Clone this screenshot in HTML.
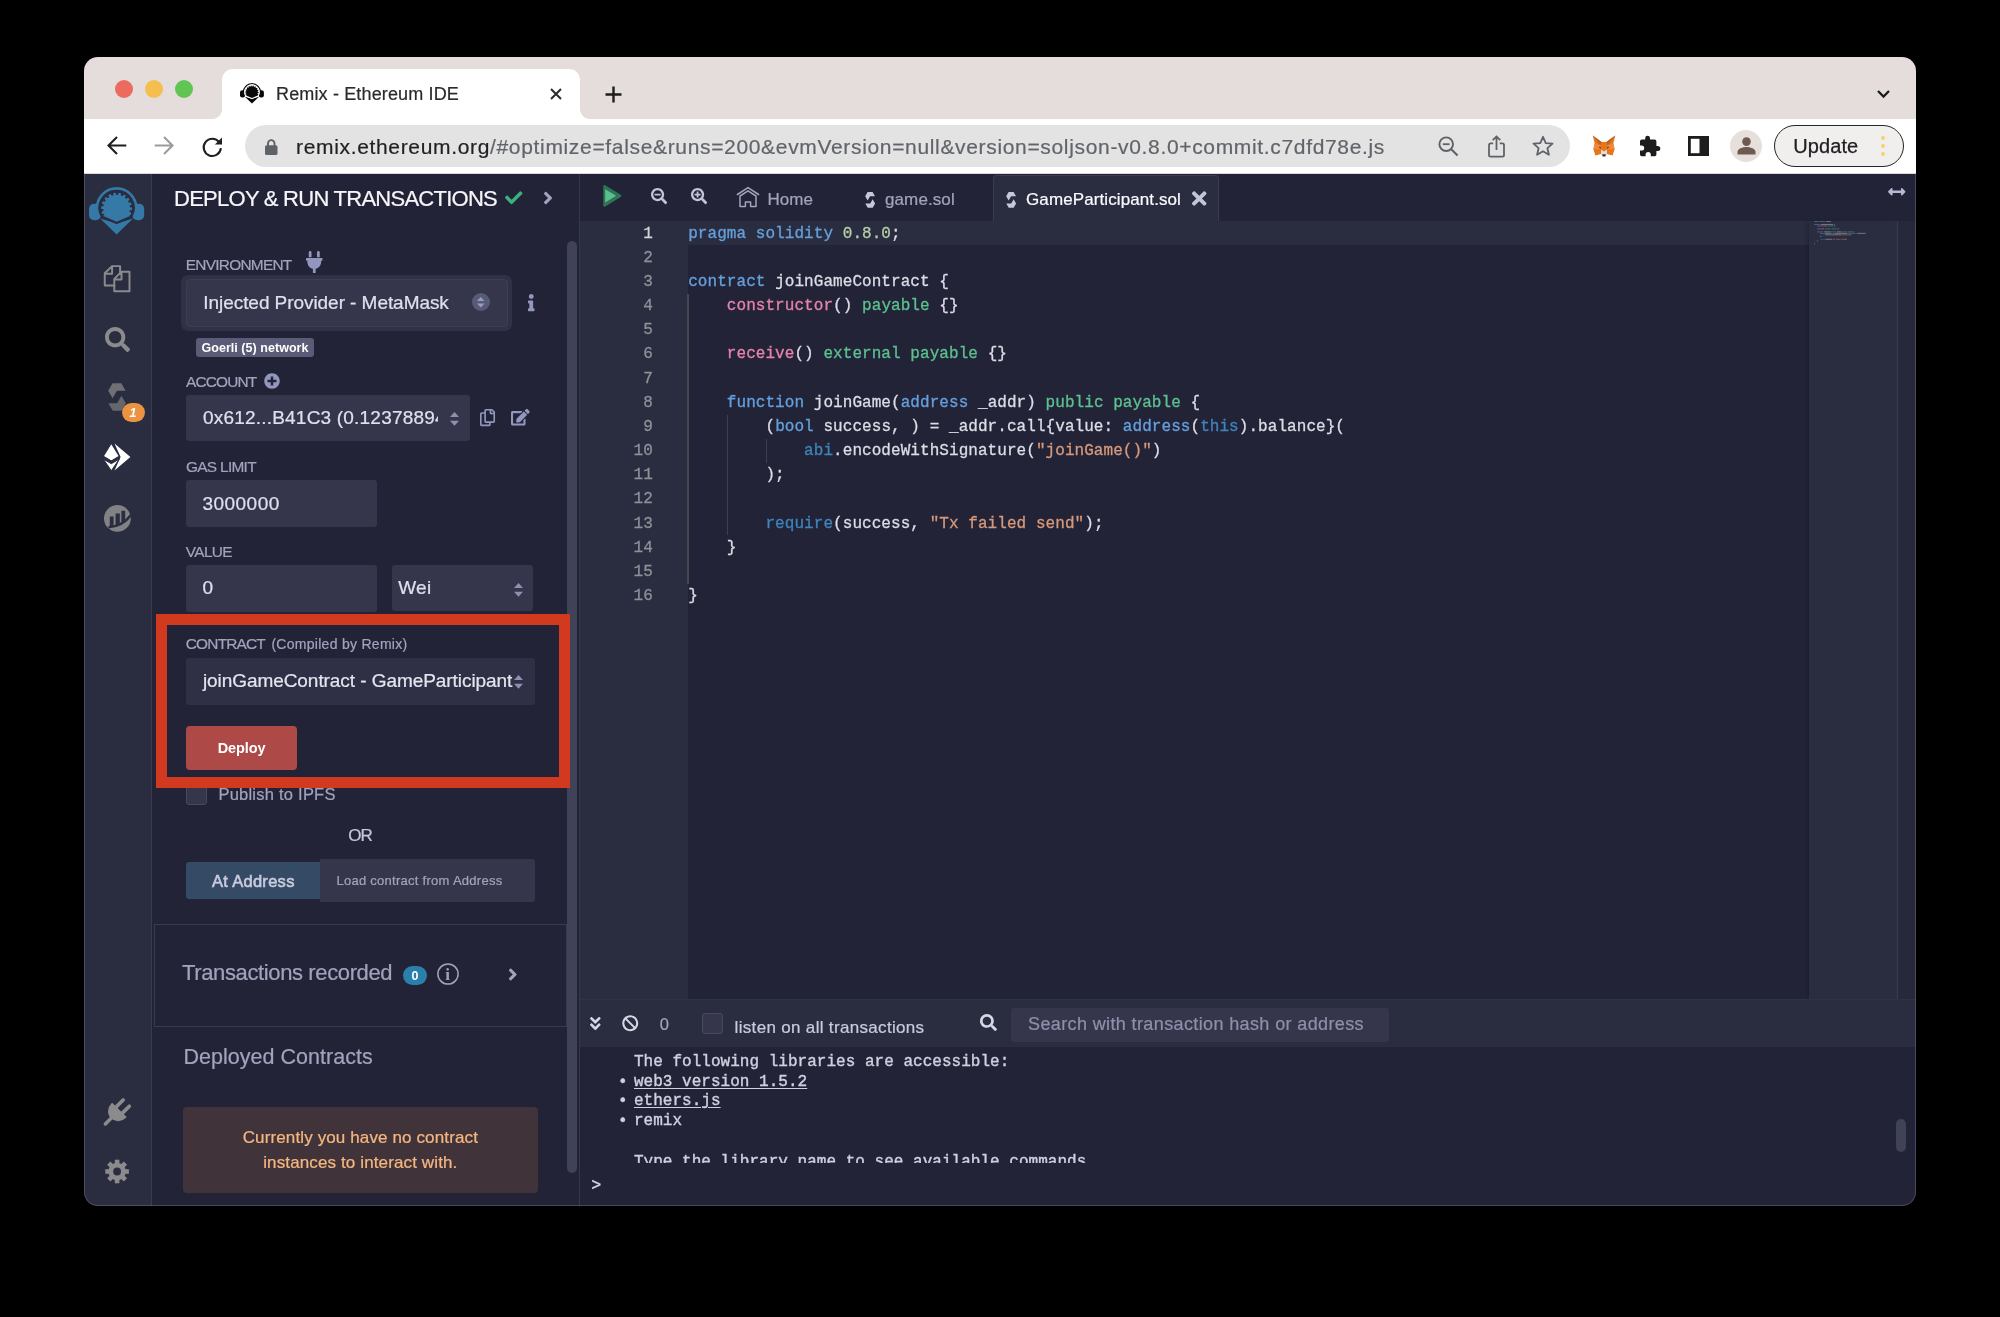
<!DOCTYPE html>
<html>
<head>
<meta charset="utf-8">
<title>Remix - Ethereum IDE</title>
<style>
*{box-sizing:border-box;margin:0;padding:0}
html,body{width:2000px;height:1317px;background:#000;overflow:hidden}
body{font-family:"Liberation Sans",sans-serif;position:relative}
#win{position:absolute;left:0;top:0;width:2000px;height:1317px;clip-path:inset(57px 84px 111px 84px round 14px);will-change:transform}
.a{position:absolute}
.t{position:absolute;white-space:pre;line-height:1}
svg{position:absolute;overflow:visible}
</style>
</head>
<body>
<div id="win">
<div class="a" style="left:84px;top:57px;width:1832px;height:1149px;background:#222336;"></div>
<div class="a" style="left:84px;top:57px;width:1832px;height:62px;background:#e4dddb;"></div>
<div class="a" style="left:222px;top:69px;width:358px;height:50px;background:#fff;border-radius:11px 11px 0 0;"></div>
<div class="a" style="left:212px;top:109px;width:10px;height:10px;background:radial-gradient(circle at 0 0,rgba(255,255,255,0) 9.5px,#fff 10.5px);"></div>
<div class="a" style="left:580px;top:109px;width:10px;height:10px;background:radial-gradient(circle at 100% 0,rgba(255,255,255,0) 9.5px,#fff 10.5px);"></div>
<div class="a" style="left:84px;top:119px;width:1832px;height:55px;background:#fff;"></div>
<div class="a" style="left:245px;top:125px;width:1325px;height:42px;background:#e3e3e3;border-radius:21px;"></div>
<div class="a" style="left:114.7px;top:79.6px;width:18px;height:18px;background:#ec6a5e;border-radius:50%;"></div>
<div class="a" style="left:144.6px;top:79.6px;width:18px;height:18px;background:#f4bf4f;border-radius:50%;"></div>
<div class="a" style="left:174.5px;top:79.6px;width:18px;height:18px;background:#61c554;border-radius:50%;"></div>
<svg style="left:240.1px;top:82.7px;" width="23.9" height="20.6" viewBox="11.5 15 121 104"><path d="M29.500,61 A42.500,42.500 0 0 1 114.500,61" stroke="#0a0a0a" stroke-width="7" fill="none"/><rect x="11.5" y="52" width="26" height="36" rx="11" fill="#0a0a0a"/><rect x="106.5" y="52" width="26" height="36" rx="11" fill="#0a0a0a"/><path d="M36,84 L72,95 L108,84 L72,119 Z" fill="#0a0a0a"/><path d="M39.350,79.850 A37.700,37.700 0 1 1 104.650,79.850 L72,94 Z" stroke="#fff" stroke-width="4.700" fill="#fff" stroke-linejoin="round"/><path d="M45.7,73.8 L40.4,74.1 L39.0,69.6 L43.5,66.8 L43.1,64.0 L38.0,62.6 L38.2,57.8 L43.4,56.8 L44.0,54.0 L39.7,50.9 L41.5,46.5 L46.7,47.3 L48.2,44.9 L45.3,40.5 L48.5,37.0 L53.1,39.5 L55.4,37.7 L54.1,32.6 L58.3,30.4 L61.8,34.4 L64.5,33.5 L65.0,28.2 L69.7,27.6 L71.7,32.5 L74.5,32.6 L76.8,27.8 L81.5,28.9 L81.6,34.1 L84.3,35.2 L88.1,31.5 L92.1,34.1 L90.4,39.1 L92.5,41.0 L97.3,38.8 L100.3,42.6 L97.0,46.7 L98.3,49.2 L103.6,48.9 L105.0,53.4 L100.5,56.2 L100.9,59.0 L106.0,60.4 L105.8,65.2 L100.6,66.2 L100.0,69.0 L104.3,72.1 L102.5,76.5 L97.3,75.7 L98.3,73.8 L101.3,78.6 L72,91.3 L42.7,78.6 Z" fill="#0a0a0a"/></svg>
<div class="t" style="left:276.00px;top:85.00px;font-size:18px;color:#2a2a2a;letter-spacing:0.148px;-webkit-text-stroke:0.2px;">Remix - Ethereum IDE</div>
<svg style="left:550px;top:88px;" width="12" height="12" viewBox="0 0 12 12"><path d="M1,1 L11,11 M11,1 L1,11" stroke="#2a2a2a" stroke-width="2" fill="none"/></svg>
<svg style="left:604.5px;top:85.5px;" width="17" height="17" viewBox="0 0 17 17"><path d="M8.5,0.5 V16.5 M0.5,8.5 H16.5" stroke="#1c1c1c" stroke-width="2.4" fill="none"/></svg>
<svg style="left:1877px;top:90px;" width="13" height="8" viewBox="0 0 13 8"><path d="M1,1 L6.5,6.5 L12,1" stroke="#1c1c1c" stroke-width="2.3" fill="none"/></svg>
<svg style="left:106.5px;top:136px;" width="20" height="19" viewBox="0 0 20 19"><path d="M19.3,9.5 H2 M10,1 L1.5,9.5 L10,18" stroke="#1f1f1f" stroke-width="2.1" fill="none" stroke-linejoin="miter"/></svg>
<svg style="left:154px;top:136px;" width="20" height="19" viewBox="0 0 20 19"><path d="M0.7,9.5 H18 M10,1 L18.5,9.5 L10,18" stroke="#9b9b9b" stroke-width="2.1" fill="none"/></svg>
<svg style="left:201.5px;top:135.5px;" width="21" height="21" viewBox="0 0 21 21"><path d="M17.2,6.2 A8.6,8.6 0 1 0 18.9,12.2" stroke="#1f1f1f" stroke-width="2.1" fill="none"/><path d="M20,1.5 V8.6 H12.9 Z" fill="#1f1f1f"/></svg>
<svg style="left:264.8px;top:138.5px;" width="12.5" height="16" viewBox="0 0 12.5 16"><rect x="0" y="6.2" width="12.5" height="9.8" rx="1.6" fill="#5f6368"/><path d="M3,7 V4.4 A3.25,3.25 0 0 1 9.5,4.4 V7" stroke="#5f6368" stroke-width="1.9" fill="none"/></svg>
<div class="t" style="left:296.00px;top:136.00px;font-size:21px;color:#61656a;letter-spacing:0.664px;-webkit-text-stroke:0.2px;"><span style="color:#1f2023">remix.ethereum.org</span>/#optimize=false&amp;runs=200&amp;evmVersion=null&amp;version=soljson-v0.8.0+commit.c7dfd78e.js</div>
<svg style="left:1437.5px;top:136px;" width="21" height="21" viewBox="0 0 21 21"><circle cx="8.2" cy="8.2" r="6.8" stroke="#5f6368" stroke-width="1.9" fill="none"/><path d="M13.2,13.2 L19.6,19.6" stroke="#5f6368" stroke-width="2.1"/><path d="M4.8,8.2 H11.6" stroke="#5f6368" stroke-width="1.8"/></svg>
<svg style="left:1487.5px;top:135px;" width="17" height="23" viewBox="0 0 17 23"><path d="M5.2,8.3 H2.6 A1.6,1.6 0 0 0 1,9.9 V20.1 A1.6,1.6 0 0 0 2.6,21.7 H14.4 A1.6,1.6 0 0 0 16,20.1 V9.9 A1.6,1.6 0 0 0 14.400,8.300 H11.800" stroke="#5f6368" stroke-width="1.8" fill="none"/><path d="M8.5,15 V1.800 M4.700,5.200 L8.500,1.500 L12.300,5.200" stroke="#5f6368" stroke-width="1.8" fill="none"/></svg>
<svg style="left:1532px;top:135px;" width="22" height="21" viewBox="0 0 22 21"><path d="M11,1.8 L13.75,8.05 L20.5,8.7 L15.4,13.2 L16.9,19.8 L11,16.3 L5.1,19.8 L6.6,13.2 L1.5,8.7 L8.25,8.05 Z" stroke="#5f6368" stroke-width="1.8" fill="none" stroke-linejoin="round"/></svg>
<svg style="left:1591.5px;top:135px;" width="24" height="23" viewBox="0 0 24 23"><path d="M0.7,0.6 L9.6,6.9 L14.4,6.9 L23.3,0.6 L21.3,8.600 L22.600,14.2 L20.6,20.6 L15,19.1 L13.6,20.9 L10.4,20.9 L9,19.1 L3.4,20.6 L1.4,14.2 L2.7,8.6 Z" fill="#e4761b"/><path d="M0.7,0.6 L9.6,6.9 L8.4,10.2 Z M23.3,0.6 L14.4,6.9 L15.6,10.2 Z" fill="#c0601a"/><path d="M2.7,8.6 L8.4,10.2 L9.2,14.4 L1.4,14.2 Z M21.3,8.6 L15.6,10.2 L14.8,14.4 L22.6,14.2 Z" fill="#f0883a"/><path d="M9.2,14.4 L9,19.1 L10.4,20.9 L13.6,20.9 L15,19.1 L14.8,14.4 L12,16.4 Z" fill="#e8ddd2"/><path d="M10.3,19.3 L13.7,19.3 L13.4,21.6 L10.6,21.6 Z" fill="#3a3028"/><path d="M6.6,11.6 L9,12.6 L8.4,13.700 Z M17.4,11.6 L15,12.6 L15.6,13.7 Z" fill="#2b2420"/></svg>
<svg style="left:1639px;top:135px;" width="22" height="22" viewBox="0 0 22 22"><path d="M8.6,0.8 A2.4,2.4 0 0 1 11,3.2 V4.6 H15.600 A1.800,1.800 0 0 1 17.400,6.400 V10.900 H18.800 A2.500,2.500 0 0 1 18.800,15.900 H17.400 V19.400 A1.800,1.800 0 0 1 15.600,21.200 H11.800 V19.600 A2.600,2.600 0 0 0 6.600,19.600 V21.200 H2.800 A1.800,1.800 0 0 1 1,19.400 V15.600 H2.600 A2.600,2.600 0 0 0 2.600,10.400 H1 V6.400 A1.800,1.800 0 0 1 2.800,4.600 H6.200 V3.200 A2.400,2.400 0 0 1 8.600,0.800 Z" fill="#1d1d1f"/></svg>
<svg style="left:1688px;top:136px;" width="21" height="20" viewBox="0 0 21 20"><rect x="1.400" y="1.400" width="18.200" height="17.200" stroke="#1d1d1f" stroke-width="2.8" fill="none"/><rect x="11.5" y="1" width="9" height="18" fill="#1d1d1f"/></svg>
<div class="a" style="left:1729.7px;top:129.7px;width:32.6px;height:32.6px;background:#e6dfdc;border-radius:50%;"></div>
<svg style="left:1736.5px;top:137px;" width="19" height="18" viewBox="0 0 19 18"><circle cx="9.5" cy="4.600" r="4.300" fill="#6e5a50"/><path d="M0.500,17.500 V14.800 C0.500,11.300 6,9.900 9.500,9.900 C13,9.900 18.500,11.300 18.500,14.800 V17.500 Z" fill="#6e5a50"/></svg>
<div class="a" style="left:1774px;top:125px;width:130px;height:41.5px;background:#f1efee;border-radius:21px;border:1.6px solid #26262a;"></div>
<div class="t" style="left:1793.30px;top:136.00px;font-size:20px;color:#1f1f22;letter-spacing:0.083px;-webkit-text-stroke:0.25px;">Update</div>
<div class="a" style="left:1881.2px;top:135.70000000000002px;width:4.2px;height:4.2px;background:#f3d56a;border-radius:50%;"></div>
<div class="a" style="left:1881.2px;top:143.9px;width:4.2px;height:4.2px;background:#f3d56a;border-radius:50%;"></div>
<div class="a" style="left:1881.2px;top:152.1px;width:4.2px;height:4.2px;background:#f3d56a;border-radius:50%;"></div>
<div class="a" style="left:84px;top:173px;width:1832px;height:1px;background:#d9d9dc;"></div>
<div class="a" style="left:84px;top:174px;width:67px;height:1032px;background:#2a2c3f;"></div>
<div class="a" style="left:151px;top:174px;width:1px;height:1032px;background:#393b50;"></div>
<svg style="left:89.2px;top:186.8px;" width="55.2" height="47.4" viewBox="11.5 15 121 104"><path d="M29.500,61 A42.500,42.500 0 0 1 114.500,61" stroke="#3579a6" stroke-width="7" fill="none"/><rect x="11.5" y="52" width="26" height="36" rx="11" fill="#3579a6"/><rect x="106.5" y="52" width="26" height="36" rx="11" fill="#3579a6"/><path d="M36,84 L72,95 L108,84 L72,119 Z" fill="#3579a6"/><path d="M39.350,79.850 A37.700,37.700 0 1 1 104.650,79.850 L72,94 Z" stroke="#2a2c3f" stroke-width="4.700" fill="#2a2c3f" stroke-linejoin="round"/><path d="M45.7,73.8 L40.4,74.1 L39.0,69.6 L43.5,66.8 L43.1,64.0 L38.0,62.6 L38.2,57.8 L43.4,56.8 L44.0,54.0 L39.7,50.9 L41.5,46.5 L46.7,47.3 L48.2,44.9 L45.3,40.5 L48.5,37.0 L53.1,39.5 L55.4,37.7 L54.1,32.6 L58.3,30.4 L61.8,34.4 L64.5,33.5 L65.0,28.2 L69.7,27.6 L71.7,32.5 L74.5,32.6 L76.8,27.8 L81.5,28.9 L81.6,34.1 L84.3,35.2 L88.1,31.5 L92.1,34.1 L90.4,39.1 L92.5,41.0 L97.3,38.8 L100.3,42.6 L97.0,46.7 L98.3,49.2 L103.6,48.9 L105.0,53.4 L100.5,56.2 L100.9,59.0 L106.0,60.4 L105.8,65.2 L100.6,66.2 L100.0,69.0 L104.3,72.1 L102.5,76.5 L97.3,75.7 L98.3,73.8 L101.3,78.6 L72,91.3 L42.7,78.6 Z" fill="#3579a6"/></svg>
<svg style="left:100px;top:262px;" width="34" height="34" viewBox="0 0 34 34"><path d="M12.1,4.1 H20.1 V10.300 M12.1,4.1 L4.74,11.3 V23.4 H14.3 M12.1,4.1 V11.8 H4.74" stroke="#8b8b8d" stroke-width="1.950" fill="none" stroke-linejoin="round" stroke-linecap="round"/><path d="M21.5,9.74 H29.5 V29.2 H14.3 V16.9 L21.5,9.74 V17.4 H14.3" stroke="#8b8b8d" stroke-width="1.950" fill="none" stroke-linejoin="round" stroke-linecap="round"/></svg>
<svg style="left:104.7px;top:326.9px;" width="25.0" height="25" viewBox="0 0 512 512"><path d="M505 442.7L405.3 343c-4.5-4.5-10.6-7-17-7H372c27.6-35.3 44-79.7 44-128C416 93.1 322.9 0 208 0S0 93.1 0 208s93.1 208 208 208c48.3 0 92.7-16.4 128-44v16.3c0 6.4 2.5 12.5 7 17l99.7 99.7c9.4 9.4 24.6 9.4 33.9 0l28.3-28.3c9.4-9.4 9.4-24.6.1-34zM208 336c-70.7 0-128-57.2-128-128 0-70.7 57.2-128 128-128 70.7 0 128 57.2 128 128 0 70.7-57.2 128-128 128z" fill="#8b8b8d" /></svg>
<svg style="left:108.1px;top:383.3px;" width="18" height="28" viewBox="0 0 18 28"><path d="M0.2,7.7 L4.5,0.2 L13.3,0.2 L17.6,7.7 L8.9,7.7 L4.6,15.2 Z" fill="#6f6f74"/><path d="M17.8,20.3 L13.5,27.8 L4.7,27.8 L0.4,20.3 L9.1,20.3 L13.4,12.8 Z" fill="#66666b"/></svg>
<div class="a" style="left:121.7px;top:403px;width:23.2px;height:19px;background:#ea9340;border-radius:9.5px;"></div>
<div class="t" style="left:129.60px;top:407.00px;font-size:12.5px;color:#fff;font-weight:700;font-style:italic;">1</div>
<svg style="left:103px;top:442.5px;" width="28" height="28" viewBox="0 0 28 28"><path d="M11.500,0.500 L27.400,14 L11.500,27.500 L17.600,14 Z" fill="#fff"/><path d="M8.300,0.300 L0.300,13.300 L8.300,17.900 L16.300,13.300 Z" fill="#fff" stroke="#2a2c3f" stroke-width="1.100" stroke-linejoin="round"/><path d="M0.300,16.100 L8.300,20.700 L16.300,16.100 L8.300,27.700 Z" fill="#fff" stroke="#2a2c3f" stroke-width="1" stroke-linejoin="round"/></svg>
<svg style="left:103.6px;top:505px;" width="26.8" height="26.8" viewBox="0 0 26.800 26.800"><circle cx="13.400" cy="13.400" r="13.400" fill="#828286"/><path d="M5.800,11.600 H9.600 V21 H5.800 Z M11.600,8.600 H15.800 V20 H11.600 Z M17.400,5.700 H21.200 V18 H17.400 Z" fill="#2a2c3f"/><path d="M4.500,22.300 C12,21.800 21,18 27.500,9.500" stroke="#2a2c3f" stroke-width="2.600" fill="none"/></svg>
<svg style="left:0px;top:0px;" width="10" height="10" viewBox="0 0 10 10"><g transform="translate(119,1110.300) rotate(45)"><path d="M-10.200,-0.600 H10.200 V0.600 A10.200,10.800 0 0 1 -10.200,0.600 Z" fill="#8b8b8d"/><path d="M-4.400,0 V-10.200 M4.400,0 V-10.200" stroke="#8b8b8d" stroke-width="3.700" stroke-linecap="round"/><path d="M0,9 V19.300" stroke="#8b8b8d" stroke-width="3.500" stroke-linecap="round"/></g></svg>
<svg style="left:0px;top:0px;" width="10" height="10" viewBox="0 0 10 10"><g transform="translate(117.100,1171.500)"><circle r="8.700" fill="#8b8b8d"/><rect x="-2.300" y="-11.800" width="4.600" height="6" transform="rotate(0)" fill="#8b8b8d"/><rect x="-2.300" y="-11.800" width="4.600" height="6" transform="rotate(45)" fill="#8b8b8d"/><rect x="-2.300" y="-11.800" width="4.600" height="6" transform="rotate(90)" fill="#8b8b8d"/><rect x="-2.300" y="-11.800" width="4.600" height="6" transform="rotate(135)" fill="#8b8b8d"/><rect x="-2.300" y="-11.800" width="4.600" height="6" transform="rotate(180)" fill="#8b8b8d"/><rect x="-2.300" y="-11.800" width="4.600" height="6" transform="rotate(225)" fill="#8b8b8d"/><rect x="-2.300" y="-11.800" width="4.600" height="6" transform="rotate(270)" fill="#8b8b8d"/><rect x="-2.300" y="-11.800" width="4.600" height="6" transform="rotate(315)" fill="#8b8b8d"/><circle r="3.900" fill="#2a2c3f"/></g></svg>
<div class="a" style="left:579px;top:174px;width:1px;height:1032px;background:#34364a;"></div>
<div class="t" style="left:174.00px;top:188.00px;font-size:22px;color:#f6f6fa;letter-spacing:-0.739px;-webkit-text-stroke:0.22px;">DEPLOY &amp; RUN TRANSACTIONS</div>
<svg style="left:504.85px;top:189.45px;" width="17.5" height="17.5" viewBox="0 0 512 512"><path d="M173.898 439.404l-166.4-166.4c-9.997-9.997-9.997-26.206 0-36.204l36.203-36.204c9.997-9.998 26.207-9.998 36.204 0L192 312.69 432.095 72.596c9.997-9.997 26.207-9.997 36.204 0l36.203 36.204c9.997 9.997 9.997 26.206 0 36.204l-294.4 294.401c-9.998 9.997-26.207 9.997-36.204-.001z" fill="#3bb27d" /></svg>
<svg style="left:542.5px;top:188.0px;" width="10.0" height="20" viewBox="0 0 256 512"><path d="M224.3 273l-136 136c-9.4 9.4-24.6 9.4-33.9 0l-22.6-22.6c-9.4-9.4-9.4-24.6 0-33.9l96.4-96.4-96.4-96.4c-9.4-9.4-9.4-24.6 0-33.9L54.3 103c9.4-9.4 24.6-9.4 33.9 0l136 136c9.5 9.4 9.5 24.6.1 34z" fill="#a2a3bd" /></svg>
<div class="t" style="left:185.80px;top:257.00px;font-size:15.4px;color:#a2a3bd;letter-spacing:-0.73px;-webkit-text-stroke:0.22px;">ENVIRONMENT</div>
<svg style="left:306.25px;top:251.0px;" width="16.5" height="22" viewBox="0 0 384 512"><path d="M256 144V32c0-17.673 14.327-32 32-32s32 14.327 32 32v112h-64zm112 16H16c-8.837 0-16 7.163-16 16v32c0 8.837 7.163 16 16 16h16v32c0 77.406 54.969 141.971 128 156.796V512h64v-99.204c73.031-14.825 128-79.39 128-156.796v-32h16c8.837 0 16-7.163 16-16v-32c0-8.837-7.163-16-16-16zm-240-16V32c0-17.673-14.327-32-32-32S64 14.327 64 32v112h64z" fill="#9397bd" /></svg>
<div class="a" style="left:181.4px;top:275px;width:330.6px;height:56.4px;background:#303146;border-radius:7px;"></div>
<div class="a" style="left:185.5px;top:279.3px;width:322.6px;height:47.8px;background:#35364b;border-radius:4px;border:1px solid #3d3e54;"></div>
<div class="t" style="left:203.30px;top:293.00px;font-size:19px;color:#dfe0ee;letter-spacing:-0.057px;-webkit-text-stroke:0.22px;">Injected Provider - MetaMask</div>
<div class="a" style="left:472px;top:292.8px;width:18px;height:18px;background:#585b76;border-radius:50%;"></div>
<svg style="left:477.25px;top:296.5px;" width="7.5" height="10.6" viewBox="0 0 7.5 10.6"><path d="M0,4 L3.75,0 L7.5,4 Z M0,6.6 L3.75,10.6 L7.5,6.6 Z" fill="#9a9cbb"/></svg>
<svg style="left:528.26px;top:293.65px;" width="6.49" height="17.3" viewBox="0 0 192 512"><path d="M20 424.229h20V279.771H20c-11.046 0-20-8.954-20-20V212c0-11.046 8.954-20 20-20h112c11.046 0 20 8.954 20 20v212.229h20c11.046 0 20 8.954 20 20V492c0 11.046-8.954 20-20 20H20c-11.046 0-20-8.954-20-20v-47.771c0-11.046 8.954-20 20-20zM96 0C56.235 0 24 32.235 24 72s32.235 72 72 72 72-32.235 72-72S135.764 0 96 0z" fill="#9397bd" /></svg>
<div class="a" style="left:196px;top:337.7px;width:117.8px;height:19.3px;background:#5a5c77;border-radius:3px;"></div>
<div class="t" style="left:201.50px;top:342.00px;font-size:12.5px;color:#fff;font-weight:700;letter-spacing:0.04px;">Goerli (5) network</div>
<div class="t" style="left:186.00px;top:374.00px;font-size:15.4px;color:#a2a3bd;letter-spacing:-0.83px;-webkit-text-stroke:0.22px;">ACCOUNT</div>
<svg style="left:264.0px;top:372.5px;" width="16.0" height="16" viewBox="0 0 512 512"><path d="M256 8C119 8 8 119 8 256s111 248 248 248 248-111 248-248S393 8 256 8zm144 276c0 6.6-5.4 12-12 12h-92v92c0 6.6-5.4 12-12 12h-56c-6.6 0-12-5.4-12-12v-92h-92c-6.6 0-12-5.4-12-12v-56c0-6.6 5.4-12 12-12h92v-92c0-6.6 5.4-12 12-12h56c6.6 0 12 5.4 12 12v92h92c6.6 0 12 5.4 12 12v56z" fill="#9397bd" /></svg>
<div class="a" style="left:186.4px;top:395.2px;width:283.3px;height:46px;background:#35364b;border-radius:3px;"></div>
<div class="a" style="left:203px;top:400px;width:234.500px;height:36px;overflow:hidden"><div class="t" style="left:0.00px;top:8.00px;font-size:19px;color:#dfe0ee;letter-spacing:0.203px;-webkit-text-stroke:0.22px;">0x612...B41C3 (0.12378894</div>
</div>
<svg style="left:450.3px;top:411.5px;" width="9" height="13.8" viewBox="0 0 9 13.8"><path d="M0,5 L4.5,0 L9,5 Z M0,8.8 L4.5,13.8 L9,8.8 Z" fill="#8d90b0"/></svg>
<svg style="left:480.08px;top:408.5px;" width="15.05" height="17.2" viewBox="0 0 448 512"><path d="M433.941 65.941l-51.882-51.882A48 48 0 0 0 348.118 0H176c-26.51 0-48 21.49-48 48v48H48c-26.51 0-48 21.49-48 48v320c0 26.51 21.49 48 48 48h224c26.51 0 48-21.49 48-48v-48h80c26.51 0 48-21.49 48-48V99.882a48 48 0 0 0-14.059-33.941zM266 464H54a6 6 0 0 1-6-6V150a6 6 0 0 1 6-6h74v224c0 26.51 21.49 48 48 48h96v42a6 6 0 0 1-6 6zm128-96H182a6 6 0 0 1-6-6V54a6 6 0 0 1 6-6h106v88c0 13.255 10.745 24 24 24h88v202a6 6 0 0 1-6 6zm6-256h-64V48h9.632c1.591 0 3.117.632 4.243 1.757l48.368 48.368a6 6 0 0 1 1.757 4.243V112z" fill="#9397bd" /></svg>
<svg style="left:510.96px;top:408.5px;" width="18.68" height="16.6" viewBox="0 0 576 512"><path d="M402.6 83.2l90.2 90.2c3.8 3.8 3.8 10 0 13.8L274.4 405.6l-92.8 10.3c-12.4 1.4-22.9-9.1-21.5-21.5l10.3-92.8L388.8 83.2c3.8-3.800 10-3.800 13.800 0zm162-22.9l-48.8-48.8c-15.2-15.2-39.9-15.2-55.2 0l-35.400 35.400c-3.800 3.800-3.800 10 0 13.800l90.200 90.200c3.800 3.800 10 3.800 13.800 0l35.400-35.400c15.200-15.300 15.200-40 0-55.200zM384 346.200V448H64V128h229.800c3.200 0 6.200-1.300 8.500-3.500l40-40c7.600-7.600 2.200-20.500-8.500-20.500H48C21.500 64 0 85.500 0 112v352c0 26.500 21.500 48 48 48h352c26.500 0 48-21.500 48-48V306.200c0-10.700-12.900-16-20.500-8.500l-40 40c-2.200 2.300-3.500 5.300-3.500 8.500z" fill="#9397bd" /></svg>
<div class="t" style="left:186.00px;top:459.00px;font-size:15.4px;color:#a2a3bd;letter-spacing:-0.69px;-webkit-text-stroke:0.22px;">GAS LIMIT</div>
<div class="a" style="left:186px;top:480px;width:191.3px;height:46.7px;background:#35364b;border-radius:3px;"></div>
<div class="t" style="left:202.40px;top:494.00px;font-size:19px;color:#dfe0ee;letter-spacing:0.49px;-webkit-text-stroke:0.22px;">3000000</div>
<div class="t" style="left:185.80px;top:544.00px;font-size:15.4px;color:#a2a3bd;letter-spacing:-0.63px;-webkit-text-stroke:0.22px;">VALUE</div>
<div class="a" style="left:186px;top:564.6px;width:191.2px;height:47px;background:#35364b;border-radius:3px;"></div>
<div class="t" style="left:202.40px;top:578.00px;font-size:19px;color:#dfe0ee;-webkit-text-stroke:0.22px;">0</div>
<div class="a" style="left:391.5px;top:565.3px;width:141.7px;height:45.6px;background:#35364b;border-radius:3px;"></div>
<div class="t" style="left:398.30px;top:578.00px;font-size:19px;color:#dfe0ee;letter-spacing:0.236px;-webkit-text-stroke:0.22px;">Wei</div>
<svg style="left:513.9px;top:582.8000000000001px;" width="9" height="13.8" viewBox="0 0 9 13.8"><path d="M0,5 L4.5,0 L9,5 Z M0,8.8 L4.5,13.8 L9,8.8 Z" fill="#8d90b0"/></svg>
<div class="t" style="left:185.80px;top:636.00px;font-size:15.4px;color:#a2a3bd;letter-spacing:-0.79px;-webkit-text-stroke:0.22px;">CONTRACT</div>
<div class="t" style="left:271.40px;top:637.00px;font-size:14px;color:#a2a3bd;letter-spacing:0.284px;-webkit-text-stroke:0.22px;">(Compiled by Remix)</div>
<div class="a" style="left:185.8px;top:658px;width:349.2px;height:47.4px;background:#2f3045;border-radius:3px;"></div>
<div class="t" style="left:202.90px;top:671.00px;font-size:19px;color:#e4e5f0;letter-spacing:-0.062px;-webkit-text-stroke:0.22px;">joinGameContract - GameParticipant</div>
<svg style="left:513.9px;top:675.1px;" width="9" height="13.8" viewBox="0 0 9 13.8"><path d="M0,5 L4.5,0 L9,5 Z M0,8.8 L4.5,13.8 L9,8.8 Z" fill="#8d90b0"/></svg>
<div class="a" style="left:185.8px;top:726.4px;width:111.2px;height:43.3px;background:#ad4946;border-radius:4px;"></div>
<div class="t" style="left:217.70px;top:741.00px;font-size:14.5px;color:#fff;font-weight:700;letter-spacing:-0.091px;">Deploy</div>
<div class="a" style="left:185.8px;top:783.5px;width:21.2px;height:21px;background:#35364b;border-radius:3px;border:1px solid #474960;"></div>
<div class="t" style="left:218.40px;top:786.00px;font-size:16.5px;color:#a2a3bd;letter-spacing:0.238px;-webkit-text-stroke:0.22px;">Publish to IPFS</div>
<div class="a" style="left:567px;top:241px;width:10.4px;height:932px;background:#404258;border-radius:5.200px;"></div>
<div class="a" style="left:156px;top:614.3px;width:414.4px;height:173.7px;background:transparent;border:11px solid #d13a1f;"></div>
<div class="t" style="left:348.20px;top:827.00px;font-size:17px;color:#c6c7d9;letter-spacing:-0.85px;-webkit-text-stroke:0.22px;">OR</div>
<div class="a" style="left:185.8px;top:862px;width:133.9px;height:37px;background:#354a64;border-radius:3px 0 0 3px;"></div>
<div class="t" style="left:212.00px;top:873.00px;font-size:16.5px;color:#c9cbdf;letter-spacing:0.29px;-webkit-text-stroke:0.6px;">At Address</div>
<div class="a" style="left:319.7px;top:859.2px;width:215.3px;height:42.8px;background:#35364b;border-radius:0 3px 3px 0;"></div>
<div class="t" style="left:336.40px;top:874.00px;font-size:13px;color:#a2a3bd;letter-spacing:0.274px;-webkit-text-stroke:0.22px;">Load contract from Address</div>
<div class="a" style="left:154px;top:923.5px;width:412.5px;height:103.2px;background:transparent;border:1px solid #383a4f;"></div>
<div class="t" style="left:182.00px;top:962.00px;font-size:22px;color:#a2a3bd;letter-spacing:-0.375px;-webkit-text-stroke:0.22px;">Transactions recorded</div>
<div class="a" style="left:403.4px;top:965.9px;width:23.4px;height:19.1px;background:#2b7fab;border-radius:9.500px;"></div>
<div class="t" style="left:411.50px;top:970.00px;font-size:12.5px;color:#fff;font-weight:700;">0</div>
<svg style="left:437px;top:963.3px;" width="22" height="22" viewBox="0 0 22 22"><circle cx="11" cy="11" r="10.100" stroke="#a2a3bd" stroke-width="1.500" fill="none"/></svg>
<div class="t" style="left:445.30px;top:966.00px;font-size:17px;color:#a2a3bd;font-weight:700;font-family:'Liberation Serif',serif;">i</div>
<svg style="left:507.95px;top:964.5px;" width="9.5" height="19" viewBox="0 0 256 512"><path d="M224.3 273l-136 136c-9.4 9.4-24.6 9.4-33.9 0l-22.6-22.6c-9.4-9.4-9.4-24.6 0-33.9l96.4-96.4-96.4-96.4c-9.4-9.4-9.4-24.6 0-33.9L54.3 103c9.4-9.4 24.6-9.4 33.9 0l136 136c9.5 9.4 9.5 24.6.1 34z" fill="#a2a3bd" /></svg>
<div class="t" style="left:183.50px;top:1047.00px;font-size:21.5px;color:#a2a3bd;letter-spacing:0.026px;-webkit-text-stroke:0.22px;">Deployed Contracts</div>
<div class="a" style="left:182.7px;top:1107.4px;width:355.3px;height:86.1px;background:#40343a;border-radius:4px;"></div>
<div class="t" style="left:182.700px;top:1128.91px;width:355.300px;text-align:center;font-size:17px;line-height:25.500px;color:#f6b680;letter-spacing:0.126px;white-space:normal;-webkit-text-stroke:0.22px"><div style="margin-top:-4.250px">Currently you have no contract<br>instances to interact with.</div></div>
<div class="a" style="left:992.5px;top:174.5px;width:226.5px;height:47px;background:#2a2c3f;border:1px solid #3a3c52;border-bottom:none;border-radius:4px 4px 0 0;"></div>
<svg style="left:601.8px;top:185.4px;" width="19.3" height="21.7" viewBox="0 0 19.300 21.700"><path d="M2.600,1.300 L18,10.850 L2.600,20.400 Z" fill="#2f7457" stroke="#2f7457" stroke-width="2.600" stroke-linejoin="round"/><path d="M3.200,4.300 L14.100,10.850 L3.200,17.400 Z" fill="#5bbf8d"/></svg>
<svg style="left:651.3px;top:188.1px;" width="16.2" height="16.2" viewBox="0 0 512 512"><path d="M304 192v32c0 6.6-5.4 12-12 12H124c-6.6 0-12-5.4-12-12v-32c0-6.6 5.4-12 12-12h168c6.6 0 12 5.4 12 12zm201 284.700L476.700 505c-9.400 9.400-24.600 9.400-33.900 0L343 405.300c-4.500-4.500-7-10.600-7-17V372c-35.300 27.600-79.700 44-128 44C93.100 416 0 322.900 0 208S93.100 0 208 0s208 93.100 208 208c0 48.300-16.400 92.700-44 128h16.300c6.400 0 12.500 2.500 17 7l99.700 99.700c9.300 9.400 9.300 24.600 0 34zM344 208c0-75.200-60.800-136-136-136S72 132.800 72 208s60.800 136 136 136 136-60.800 136-136z" fill="#c3c4d9" /></svg>
<svg style="left:691.3px;top:188.1px;" width="16.2" height="16.2" viewBox="0 0 512 512"><path d="M304 192v32c0 6.6-5.4 12-12 12h-56v56c0 6.6-5.4 12-12 12h-32c-6.6 0-12-5.4-12-12v-56h-56c-6.6 0-12-5.400-12-12v-32c0-6.600 5.400-12 12-12h56v-56c0-6.600 5.400-12 12-12h32c6.600 0 12 5.400 12 12v56h56c6.600 0 12 5.400 12 12zm201 284.700L476.700 505c-9.400 9.400-24.600 9.400-33.900 0L343 405.300c-4.500-4.500-7-10.600-7-17V372c-35.300 27.600-79.700 44-128 44C93.100 416 0 322.900 0 208S93.100 0 208 0s208 93.100 208 208c0 48.300-16.400 92.700-44 128h16.300c6.400 0 12.500 2.500 17 7l99.700 99.700c9.300 9.400 9.300 24.600 0 34zM344 208c0-75.200-60.800-136-136-136S72 132.800 72 208s60.800 136 136 136 136-60.800 136-136z" fill="#c3c4d9" /></svg>
<svg style="left:736px;top:186px;" width="24" height="22" viewBox="0 0 24 22"><path d="M1.400,8.500 L12,1.700 L22.600,8.500" stroke="#a2a3bd" stroke-width="1.500" fill="none" stroke-linejoin="miter" stroke-linecap="round"/><path d="M4,20.600 V10 L12,4.900 L20,10 V20.600 H14.600 V16 H9.400 V20.600 Z" stroke="#a2a3bd" stroke-width="1.500" fill="none" stroke-linejoin="round"/></svg>
<div class="t" style="left:767.40px;top:191.00px;font-size:17px;color:#a2a3bd;letter-spacing:0.06px;-webkit-text-stroke:0.22px;">Home</div>
<svg style="left:864.7px;top:191.6px;" width="10.3" height="15.8" viewBox="0 0 18 28"><path d="M0.2,7.7 L4.5,0.2 L13.3,0.2 L17.6,7.7 L8.9,7.7 L4.6,15.2 Z" fill="#c6c7dc"/><path d="M17.8,20.3 L13.5,27.8 L4.7,27.8 L0.4,20.3 L9.1,20.3 L13.4,12.8 Z" fill="#c6c7dc"/></svg>
<div class="t" style="left:885.00px;top:191.00px;font-size:17px;color:#a2a3bd;letter-spacing:0.102px;-webkit-text-stroke:0.22px;">game.sol</div>
<svg style="left:1006.2px;top:191.6px;" width="10.3" height="15.8" viewBox="0 0 18 28"><path d="M0.2,7.7 L4.5,0.2 L13.3,0.2 L17.6,7.7 L8.9,7.7 L4.6,15.2 Z" fill="#c6c7dc"/><path d="M17.8,20.3 L13.5,27.8 L4.7,27.8 L0.4,20.3 L9.1,20.3 L13.4,12.8 Z" fill="#c6c7dc"/></svg>
<div class="t" style="left:1026.00px;top:191.00px;font-size:17px;color:#fbfbff;letter-spacing:0.101px;-webkit-text-stroke:0.22px;">GameParticipant.sol</div>
<svg style="left:1192.38px;top:187.5px;" width="14.44" height="21" viewBox="0 0 352 512"><path d="M242.72 256l100.07-100.07c12.28-12.28 12.28-32.19 0-44.48l-22.24-22.24c-12.28-12.28-32.19-12.28-44.48 0L176 189.28 75.93 89.21c-12.28-12.28-32.19-12.28-44.48 0L9.21 111.45c-12.28 12.28-12.28 32.19 0 44.48L109.28 256 9.21 356.07c-12.28 12.28-12.28 32.19 0 44.48l22.24 22.24c12.28 12.28 32.2 12.28 44.48 0L176 322.72l100.07 100.07c12.28 12.28 32.2 12.28 44.48 0l22.24-22.24c12.28-12.28 12.28-32.19 0-44.48L242.72 256z" fill="#c3c4d9" /></svg>
<svg style="left:1888.25px;top:182.75px;" width="17.5" height="17.5" viewBox="0 0 512 512"><path d="M377.941 169.941V216H134.059v-46.059c0-21.382-25.851-32.090-40.971-16.971L7.029 239.029c-9.373 9.373-9.373 24.568 0 33.941l86.059 86.059c15.119 15.119 40.971 4.411 40.971-16.971V296h243.882v46.059c0 21.382 25.851 32.090 40.971 16.971l86.059-86.059c9.373-9.373 9.373-24.568 0-33.941l-86.059-86.059c-15.119-15.120-40.971-4.412-40.971 16.970z" fill="#b7b8d3" /></svg>
<div class="a" style="left:580px;top:220.6px;width:107.5px;height:778.9px;background:#2a2c3f;"></div>
<div class="a" style="left:687.5px;top:221px;width:1121px;height:24.4px;background:#2a2c3f;"></div>
<div class="a" style="left:1808.5px;top:221px;width:89.3px;height:778.5px;background:#2a2c3f;box-shadow:-3px 0 4px -2px rgba(0,0,0,0.25);"></div>
<div class="a" style="left:1898px;top:221px;width:18px;height:778.5px;background:#27283a;"></div>
<div class="a" style="left:1897px;top:221px;width:1px;height:778.5px;background:#393b50;"></div>
<div class="a" style="left:687.4px;top:293.71px;width:1.6px;height:290.04px;background:#48474f;"></div>
<div class="a" style="left:726.8px;top:414.56px;width:1px;height:120.85000000000008px;background:#3d3e52;"></div>
<div class="a" style="left:765.6px;top:438.73px;width:1px;height:24.16999999999996px;background:#3d3e52;"></div>
<div class="t" style="left:600px;width:52.800px;text-align:right;top:226.00px;font-size:16px;color:#d4d4dc;font-family:'Liberation Mono',monospace;-webkit-text-stroke:0.3px">1</div>
<div class="t" style="left:688.20px;top:226.00px;font-size:16px;color:#dcdde6;letter-spacing:0.057px;font-family:'Liberation Mono',monospace;-webkit-text-stroke:0.3px;"><span style="color:#64a0dc">pragma solidity</span><span style="color:#b5cea8"> 0.8.0</span><span style="color:#dcdde6">;</span></div>
<div class="t" style="left:600px;width:52.800px;text-align:right;top:250.00px;font-size:16px;color:#8f9099;font-family:'Liberation Mono',monospace;-webkit-text-stroke:0.3px">2</div>
<div class="t" style="left:600px;width:52.800px;text-align:right;top:274.00px;font-size:16px;color:#8f9099;font-family:'Liberation Mono',monospace;-webkit-text-stroke:0.3px">3</div>
<div class="t" style="left:688.20px;top:274.00px;font-size:16px;color:#dcdde6;letter-spacing:0.057px;font-family:'Liberation Mono',monospace;-webkit-text-stroke:0.3px;"><span style="color:#64a0dc">contract</span><span style="color:#dcdde6"> joinGameContract {</span></div>
<div class="t" style="left:600px;width:52.800px;text-align:right;top:298.00px;font-size:16px;color:#8f9099;font-family:'Liberation Mono',monospace;-webkit-text-stroke:0.3px">4</div>
<div class="t" style="left:688.20px;top:298.00px;font-size:16px;color:#dcdde6;letter-spacing:0.057px;font-family:'Liberation Mono',monospace;-webkit-text-stroke:0.3px;"><span style="color:#e483ab">    constructor</span><span style="color:#dcdde6">() </span><span style="color:#5cc190">payable</span><span style="color:#dcdde6"> {}</span></div>
<div class="t" style="left:600px;width:52.800px;text-align:right;top:322.00px;font-size:16px;color:#8f9099;font-family:'Liberation Mono',monospace;-webkit-text-stroke:0.3px">5</div>
<div class="t" style="left:600px;width:52.800px;text-align:right;top:346.00px;font-size:16px;color:#8f9099;font-family:'Liberation Mono',monospace;-webkit-text-stroke:0.3px">6</div>
<div class="t" style="left:688.20px;top:346.00px;font-size:16px;color:#dcdde6;letter-spacing:0.057px;font-family:'Liberation Mono',monospace;-webkit-text-stroke:0.3px;"><span style="color:#e483ab">    receive</span><span style="color:#dcdde6">() </span><span style="color:#5cc190">external payable</span><span style="color:#dcdde6"> {}</span></div>
<div class="t" style="left:600px;width:52.800px;text-align:right;top:371.00px;font-size:16px;color:#8f9099;font-family:'Liberation Mono',monospace;-webkit-text-stroke:0.3px">7</div>
<div class="t" style="left:600px;width:52.800px;text-align:right;top:395.00px;font-size:16px;color:#8f9099;font-family:'Liberation Mono',monospace;-webkit-text-stroke:0.3px">8</div>
<div class="t" style="left:688.20px;top:395.00px;font-size:16px;color:#dcdde6;letter-spacing:0.057px;font-family:'Liberation Mono',monospace;-webkit-text-stroke:0.3px;"><span style="color:#64a0dc">    function</span><span style="color:#dcdde6"> joinGame(</span><span style="color:#64a0dc">address</span><span style="color:#dcdde6"> _addr) </span><span style="color:#5cc190">public payable</span><span style="color:#dcdde6"> {</span></div>
<div class="t" style="left:600px;width:52.800px;text-align:right;top:419.00px;font-size:16px;color:#8f9099;font-family:'Liberation Mono',monospace;-webkit-text-stroke:0.3px">9</div>
<div class="t" style="left:688.20px;top:419.00px;font-size:16px;color:#dcdde6;letter-spacing:0.057px;font-family:'Liberation Mono',monospace;-webkit-text-stroke:0.3px;"><span style="color:#dcdde6">        (</span><span style="color:#64a0dc">bool</span><span style="color:#dcdde6"> success, ) = _addr.call{value: </span><span style="color:#64a0dc">address</span><span style="color:#dcdde6">(</span><span style="color:#3f84ba">this</span><span style="color:#dcdde6">).balance}(</span></div>
<div class="t" style="left:600px;width:52.800px;text-align:right;top:443.00px;font-size:16px;color:#8f9099;font-family:'Liberation Mono',monospace;-webkit-text-stroke:0.3px">10</div>
<div class="t" style="left:688.20px;top:443.00px;font-size:16px;color:#dcdde6;letter-spacing:0.057px;font-family:'Liberation Mono',monospace;-webkit-text-stroke:0.3px;"><span style="color:#3f84ba">            abi</span><span style="color:#dcdde6">.encodeWithSignature(</span><span style="color:#d7997b">&quot;joinGame()&quot;</span><span style="color:#dcdde6">)</span></div>
<div class="t" style="left:600px;width:52.800px;text-align:right;top:467.00px;font-size:16px;color:#8f9099;font-family:'Liberation Mono',monospace;-webkit-text-stroke:0.3px">11</div>
<div class="t" style="left:688.20px;top:467.00px;font-size:16px;color:#dcdde6;letter-spacing:0.057px;font-family:'Liberation Mono',monospace;-webkit-text-stroke:0.3px;"><span style="color:#dcdde6">        );</span></div>
<div class="t" style="left:600px;width:52.800px;text-align:right;top:491.00px;font-size:16px;color:#8f9099;font-family:'Liberation Mono',monospace;-webkit-text-stroke:0.3px">12</div>
<div class="t" style="left:600px;width:52.800px;text-align:right;top:516.00px;font-size:16px;color:#8f9099;font-family:'Liberation Mono',monospace;-webkit-text-stroke:0.3px">13</div>
<div class="t" style="left:688.20px;top:516.00px;font-size:16px;color:#dcdde6;letter-spacing:0.057px;font-family:'Liberation Mono',monospace;-webkit-text-stroke:0.3px;"><span style="color:#3f84ba">        require</span><span style="color:#dcdde6">(success, </span><span style="color:#d7997b">&quot;Tx failed send&quot;</span><span style="color:#dcdde6">);</span></div>
<div class="t" style="left:600px;width:52.800px;text-align:right;top:540.00px;font-size:16px;color:#8f9099;font-family:'Liberation Mono',monospace;-webkit-text-stroke:0.3px">14</div>
<div class="t" style="left:688.20px;top:540.00px;font-size:16px;color:#dcdde6;letter-spacing:0.057px;font-family:'Liberation Mono',monospace;-webkit-text-stroke:0.3px;"><span style="color:#dcdde6">    }</span></div>
<div class="t" style="left:600px;width:52.800px;text-align:right;top:564.00px;font-size:16px;color:#8f9099;font-family:'Liberation Mono',monospace;-webkit-text-stroke:0.3px">15</div>
<div class="t" style="left:600px;width:52.800px;text-align:right;top:588.00px;font-size:16px;color:#8f9099;font-family:'Liberation Mono',monospace;-webkit-text-stroke:0.3px">16</div>
<div class="t" style="left:688.20px;top:588.00px;font-size:16px;color:#dcdde6;letter-spacing:0.057px;font-family:'Liberation Mono',monospace;-webkit-text-stroke:0.3px;"><span style="color:#dcdde6">}</span></div>
<svg style="left:1814px;top:221.2px;" width="60" height="24" viewBox="0 0 60 24"><rect x="0.00" y="0.00" width="4.56" height="1" fill="#4f7fae" opacity="0.600"/><rect x="5.32" y="0.00" width="6.08" height="1" fill="#4f7fae" opacity="0.600"/><rect x="12.16" y="0.00" width="3.80" height="1" fill="#93a78b" opacity="0.600"/><rect x="15.96" y="0.00" width="0.76" height="1" fill="#a7a8b3" opacity="0.600"/><rect x="0.00" y="2.96" width="6.08" height="1" fill="#4f7fae" opacity="0.600"/><rect x="6.84" y="2.96" width="12.16" height="1" fill="#a7a8b3" opacity="0.600"/><rect x="19.76" y="2.96" width="0.76" height="1" fill="#a7a8b3" opacity="0.600"/><rect x="3.04" y="4.44" width="8.36" height="1" fill="#b3648a" opacity="0.600"/><rect x="11.40" y="4.44" width="1.52" height="1" fill="#a7a8b3" opacity="0.600"/><rect x="13.68" y="4.44" width="5.32" height="1" fill="#4d9a76" opacity="0.600"/><rect x="19.76" y="4.44" width="1.52" height="1" fill="#a7a8b3" opacity="0.600"/><rect x="3.04" y="7.40" width="5.32" height="1" fill="#b3648a" opacity="0.600"/><rect x="8.36" y="7.40" width="1.52" height="1" fill="#a7a8b3" opacity="0.600"/><rect x="10.64" y="7.40" width="6.08" height="1" fill="#4d9a76" opacity="0.600"/><rect x="17.48" y="7.40" width="5.32" height="1" fill="#4d9a76" opacity="0.600"/><rect x="23.56" y="7.40" width="1.52" height="1" fill="#a7a8b3" opacity="0.600"/><rect x="3.04" y="10.36" width="6.08" height="1" fill="#4f7fae" opacity="0.600"/><rect x="9.88" y="10.36" width="6.84" height="1" fill="#a7a8b3" opacity="0.600"/><rect x="16.72" y="10.36" width="5.32" height="1" fill="#4f7fae" opacity="0.600"/><rect x="22.80" y="10.36" width="4.56" height="1" fill="#a7a8b3" opacity="0.600"/><rect x="28.12" y="10.36" width="4.56" height="1" fill="#4d9a76" opacity="0.600"/><rect x="33.44" y="10.36" width="5.32" height="1" fill="#4d9a76" opacity="0.600"/><rect x="39.52" y="10.36" width="0.76" height="1" fill="#a7a8b3" opacity="0.600"/><rect x="6.08" y="11.84" width="0.76" height="1" fill="#a7a8b3" opacity="0.600"/><rect x="6.84" y="11.84" width="3.04" height="1" fill="#4f7fae" opacity="0.600"/><rect x="10.64" y="11.84" width="6.08" height="1" fill="#a7a8b3" opacity="0.600"/><rect x="17.48" y="11.84" width="0.76" height="1" fill="#a7a8b3" opacity="0.600"/><rect x="19.00" y="11.84" width="0.76" height="1" fill="#a7a8b3" opacity="0.600"/><rect x="20.52" y="11.84" width="12.92" height="1" fill="#a7a8b3" opacity="0.600"/><rect x="34.20" y="11.84" width="5.32" height="1" fill="#4f7fae" opacity="0.600"/><rect x="39.52" y="11.84" width="0.76" height="1" fill="#a7a8b3" opacity="0.600"/><rect x="40.28" y="11.84" width="3.04" height="1" fill="#3b6a94" opacity="0.600"/><rect x="43.32" y="11.84" width="8.36" height="1" fill="#a7a8b3" opacity="0.600"/><rect x="9.12" y="13.32" width="2.28" height="1" fill="#3b6a94" opacity="0.600"/><rect x="11.40" y="13.32" width="15.96" height="1" fill="#a7a8b3" opacity="0.600"/><rect x="27.36" y="13.32" width="9.12" height="1" fill="#a87c68" opacity="0.600"/><rect x="36.48" y="13.32" width="0.76" height="1" fill="#a7a8b3" opacity="0.600"/><rect x="6.08" y="14.80" width="1.52" height="1" fill="#a7a8b3" opacity="0.600"/><rect x="6.08" y="17.76" width="5.32" height="1" fill="#3b6a94" opacity="0.600"/><rect x="11.40" y="17.76" width="6.84" height="1" fill="#a7a8b3" opacity="0.600"/><rect x="19.00" y="17.76" width="2.28" height="1" fill="#a87c68" opacity="0.600"/><rect x="22.04" y="17.76" width="4.56" height="1" fill="#a87c68" opacity="0.600"/><rect x="27.36" y="17.76" width="3.80" height="1" fill="#a87c68" opacity="0.600"/><rect x="31.16" y="17.76" width="1.52" height="1" fill="#a7a8b3" opacity="0.600"/><rect x="3.04" y="19.24" width="0.76" height="1" fill="#a7a8b3" opacity="0.600"/><rect x="0.00" y="22.20" width="0.76" height="1" fill="#a7a8b3" opacity="0.600"/></svg>
<div class="a" style="left:580px;top:999.5px;width:1336px;height:47.3px;background:#2a2c3f;"></div>
<div class="a" style="left:580px;top:999px;width:1336px;height:1px;background:#2f3145;"></div>
<svg style="left:590.29px;top:1014.5px;" width="10.62" height="17" viewBox="0 0 320 512"><path d="M143 256.3L7 120.3c-9.4-9.4-9.4-24.6 0-33.9l22.6-22.6c9.4-9.4 24.6-9.4 33.9 0l96.4 96.4 96.4-96.4c9.4-9.4 24.6-9.4 33.9 0L313 86.3c9.4 9.4 9.4 24.6 0 33.9l-136 136c-9.4 9.5-24.6 9.5-34 .1zm34 192l136-136c9.4-9.4 9.4-24.6 0-33.9l-22.6-22.6c-9.4-9.4-24.6-9.4-33.9 0L160 352.1l-96.4-96.4c-9.4-9.4-24.6-9.4-33.900 0L7 278.3c-9.4 9.4-9.4 24.6 0 33.900l136 136c9.4 9.5 24.6 9.5 34 .1z" fill="#d6d7e5" /></svg>
<svg style="left:622.15px;top:1014.75px;" width="16.5" height="16.5" viewBox="0 0 512 512"><path d="M256 8C119.034 8 8 119.033 8 256s111.034 248 248 248 248-111.034 248-248S392.967 8 256 8zm130.108 117.892c65.448 65.448 70 165.481 20.677 235.637L150.47 105.216c70.204-49.356 170.226-44.735 235.638 20.676zM125.892 386.108c-65.448-65.448-70-165.481-20.677-235.637L361.53 406.784c-70.203 49.356-170.226 44.736-235.638-20.676z" fill="#d6d7e5" /></svg>
<div class="t" style="left:659.80px;top:1016.00px;font-size:16.5px;color:#a2a3bd;-webkit-text-stroke:0.22px;">0</div>
<div class="a" style="left:701.8px;top:1012.8px;width:21.7px;height:21.7px;background:#35364b;border-radius:3px;border:1px solid #474960;"></div>
<div class="t" style="left:734.60px;top:1019.00px;font-size:17px;color:#c9cadb;letter-spacing:0.322px;-webkit-text-stroke:0.22px;">listen on all transactions</div>
<svg style="left:979.5px;top:1014.1px;" width="17.0" height="17" viewBox="0 0 512 512"><path d="M505 442.7L405.3 343c-4.5-4.5-10.6-7-17-7H372c27.6-35.3 44-79.7 44-128C416 93.1 322.9 0 208 0S0 93.1 0 208s93.1 208 208 208c48.3 0 92.7-16.4 128-44v16.3c0 6.4 2.5 12.5 7 17l99.7 99.7c9.4 9.4 24.6 9.4 33.9 0l28.3-28.3c9.4-9.4 9.4-24.6.1-34zM208 336c-70.7 0-128-57.2-128-128 0-70.7 57.2-128 128-128 70.7 0 128 57.2 128 128 0 70.7-57.2 128-128 128z" fill="#d6d7e5" /></svg>
<div class="a" style="left:1010.5px;top:1007.5px;width:378.5px;height:34px;background:#35364b;border-radius:3px;"></div>
<div class="t" style="left:1028.00px;top:1015.00px;font-size:18px;color:#8e90ab;letter-spacing:0.38px;-webkit-text-stroke:0.22px;">Search with transaction hash or address</div>
<div class="a" style="left:580px;top:1047px;width:1310px;height:116.400px;overflow:hidden"><div class="t" style="left:54.00px;top:7.00px;font-size:16px;color:#cfd0e0;letter-spacing:0.021px;font-family:'Liberation Mono',monospace;-webkit-text-stroke:0.4px;">The following libraries are accessible:</div>
<div class="t" style="left:38.00px;top:27.00px;font-size:16px;color:#cfd0e0;letter-spacing:0.021px;font-family:'Liberation Mono',monospace;-webkit-text-stroke:0.4px;">•</div>
<div class="t" style="left:54.00px;top:27.00px;font-size:16px;color:#cfd0e0;letter-spacing:0.021px;font-family:'Liberation Mono',monospace;text-decoration:underline;text-decoration-thickness:1.100px;text-underline-offset:1.800px;-webkit-text-stroke:0.4px;">web3 version 1.5.2</div>
<div class="t" style="left:38.00px;top:46.00px;font-size:16px;color:#cfd0e0;letter-spacing:0.021px;font-family:'Liberation Mono',monospace;-webkit-text-stroke:0.4px;">•</div>
<div class="t" style="left:54.00px;top:46.00px;font-size:16px;color:#cfd0e0;letter-spacing:0.021px;font-family:'Liberation Mono',monospace;text-decoration:underline;text-decoration-thickness:1.100px;text-underline-offset:1.800px;-webkit-text-stroke:0.4px;">ethers.js</div>
<div class="t" style="left:38.00px;top:66.00px;font-size:16px;color:#cfd0e0;letter-spacing:0.021px;font-family:'Liberation Mono',monospace;-webkit-text-stroke:0.4px;">•</div>
<div class="t" style="left:54.00px;top:66.00px;font-size:16px;color:#cfd0e0;letter-spacing:0.021px;font-family:'Liberation Mono',monospace;-webkit-text-stroke:0.4px;">remix</div>
<div class="t" style="left:54.00px;top:107.00px;font-size:16px;color:#cfd0e0;letter-spacing:0.021px;font-family:'Liberation Mono',monospace;-webkit-text-stroke:0.4px;">Type the library name to see available commands.</div>
</div>
<div class="t" style="left:591.50px;top:1178.00px;font-size:16px;color:#cfd0e0;font-family:'Liberation Mono',monospace;-webkit-text-stroke:0.5px;">&gt;</div>
<div class="a" style="left:1895.5px;top:1118.7px;width:10.5px;height:33.5px;background:#404258;border-radius:5.250px;"></div>
</div>
<div class="a" style="left:84px;top:173px;width:1832px;height:1033px;border-radius:0 0 14px 14px;border:1px solid rgba(160,160,185,0.30);border-top:none;pointer-events:none"></div>
</body>
</html>
